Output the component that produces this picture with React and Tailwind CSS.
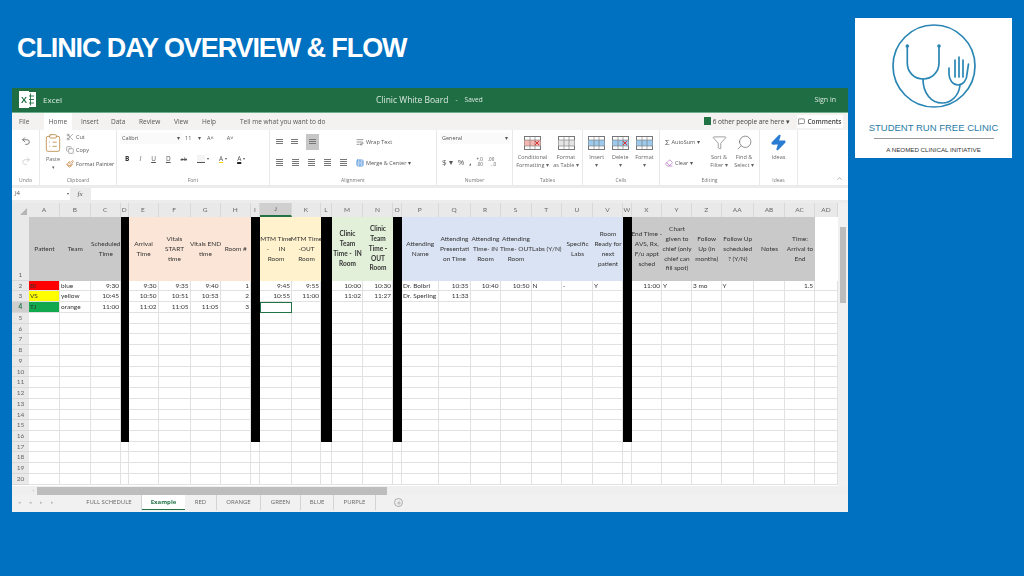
import React from "react";
import {
  Undo2,
  Redo2,
  Scissors,
  Copy,
  Paintbrush,
  ChevronUp,
  Search,
  Zap,
  Eraser,
  MessageSquare,
  Filter,
  Plus,
  WrapText,
  TableCellsMerge,
  ClipboardList,
} from "lucide-react";

const COLUMNS = ["A","B","C","D","E","F","G","H","I","J","K","L","M","N","O","P","Q","R","S","T","U","V","W","X","Y","Z","AA","AB","AC","AD"];
const BLACK = ["D", "I", "L", "O", "W"];

const HEADERS = {
  A: "Patient", B: "Team", C: "Scheduled\nTime",
  E: "Arrival\nTime", F: "Vitals\nSTART\ntime", G: "Vitals END\ntime", H: "Room #",
  J: "MTM Time\n-      IN\nRoom", K: "MTM Time\n-OUT\nRoom",
  M: "Clinic\nTeam\nTime -  IN\nRoom", N: "Clinic\nTeam\nTime -\nOUT\nRoom",
  P: "Attending\nName", Q: "Attending\nPresentati\non Time", R: "Attending\nTime- IN\nRoom", S: "Attending\nTime- OUT\nRoom",
  T: "Labs (Y/N)", U: "Specific\nLabs", V: "Room\nReady for\nnext\npatient",
  X: "End Time -\nAVS, Rx,\nF/u appt\nsched", Y: "Chart\ngiven to\nchief (only\nchief can\nfill spot)", Z: "Follow\nUp (in\nmonths)", AA: "Follow Up\nscheduled\n? (Y/N)", AB: "Notes", AC: "Time:\nArrival to\nEnd",
};

function headerFill(col) {
  if (["A", "B", "C", "X", "Y", "Z", "AA", "AB", "AC"].includes(col)) return "bg-[#c9c9c9]";
  if (["E", "F", "G", "H"].includes(col)) return "bg-[#fbe5d6]";
  if (["J", "K"].includes(col)) return "bg-[#fff2cc]";
  if (["M", "N"].includes(col)) return "bg-[#e2f0d9]";
  if (["P", "Q", "R", "S", "T", "U", "V"].includes(col)) return "bg-[#dae3f3]";
  return "bg-white";
}

const ROWS = {
  2: { A: "BI", B: "blue", C: "9:30", E: "9:30", F: "9:35", G: "9:40", H: "1", J: "9:45", K: "9:55", M: "10:00", N: "10:30", P: "Dr. Bolbri", Q: "10:35", R: "10:40", S: "10:50", T: "N", U: "-", V: "Y", X: "11:00", Y: "Y", Z: "3 mo", AA: "Y", AC: "1.5" },
  3: { A: "VS", B: "yellow", C: "10:45", E: "10:50", F: "10:51", G: "10:53", H: "2", J: "10:55", K: "11:00", M: "11:02", N: "11:27", P: "Dr. Sperling", Q: "11:33" },
  4: { A: "TJ", B: "orange", C: "11:00", E: "11:02", F: "11:05", G: "11:05", H: "3" },
};
const LEFT_ALIGNED = ["A", "B", "P", "T", "U", "V", "Y", "Z", "AA"];
const PATIENT_FILL = { 2: "bg-[#ff0000]", 3: "bg-[#ffff00]", 4: "bg-[#12a84d]" };
const ROW_NUMBERS = Array.from({ length: 19 }, (_, i) => i + 2);

function Group({ label, className, children }) {
  return (
    <div className={`flex flex-col border-r border-[#e8e8e8] ${className}`}>
      <div className="flex-1 min-h-0 flex">{children}</div>
      <div className="h-[10px] text-center text-[5px] leading-[10px] text-[#777]">{label}</div>
    </div>
  );
}

function BigButton({ children, lines, className = "" }) {
  return (
    <div className={`flex flex-col items-center pt-[3px] ${className}`}>
      <div className="h-[20px] flex items-center justify-center">{children}</div>
      <div className="text-center text-[5.5px] leading-[8.5px] text-[#666] whitespace-pre">{lines}</div>
    </div>
  );
}

function GridIcon({ fill, accent }) {
  return (
    <svg width="17" height="16" viewBox="0 0 17 16">
      <rect x="0.5" y="1.5" width="16" height="13" fill="#fff" stroke="#777" />
      <rect x="0.5" y="5" width="16" height="6" fill={fill} />
      <path d="M6 1.5V14.5M11 1.5V14.5M0.5 5H16.5M0.5 11H16.5" stroke="#777" strokeWidth="0.6" />
      {accent && <path d="M11 6l4 4M15 6l-4 4" stroke={accent} strokeWidth="1" />}
    </svg>
  );
}

function Ribbon() {
  return (
    <div className="h-[57px] flex bg-white border-b-2 border-[#ececec]">
      <Group label="Undo" className="w-[28px]">
        <div className="w-full flex flex-col items-center gap-[10px] pt-[6px]">
          <Undo2 size={10} className="text-[#666]" />
          <Redo2 size={10} className="text-[#ccc]" />
        </div>
      </Group>
      <Group label="Clipboard" className="w-[77px]">
        <div className="w-[26px] flex flex-col items-center pt-[3px]">
          <ClipboardList size={20} strokeWidth={1} className="text-[#b98b45]" />
          <div className="text-[5.5px] leading-[9px] text-[#666] mt-[2px]">Paste</div>
          <div className="text-[5px] leading-[7px] text-[#666]">▾</div>
        </div>
        <div className="flex flex-col gap-[3.5px] pt-[2px] text-[5.5px] leading-[10px] text-[#555]">
          <div className="flex items-center gap-[2px]"><Scissors size={8} className="text-[#888]" />Cut</div>
          <div className="flex items-center gap-[2px]"><Copy size={8} className="text-[#888]" />Copy</div>
          <div className="flex items-center gap-[2px] whitespace-nowrap"><Paintbrush size={8} className="text-[#c0762a]" />Format Painter</div>
        </div>
      </Group>
      <Group label="Font" className="w-[153px]">
        <div className="pl-[3px] pt-[3px] flex flex-col gap-[9px] text-[#555]">
          <div className="flex items-center text-[5.5px] leading-[11px]">
            <div className="w-[63px] flex justify-between pl-[2px] pr-[3px] bg-[#fafafa]"><span>Calibri</span><span>▾</span></div>
            <div className="w-[20px] flex justify-between pl-[2px] pr-[2px]"><span>11</span><span>▾</span></div>
            <span className="ml-[4px]">A˄</span>
            <span className="ml-[13px]">A˅</span>
          </div>
          <div className="flex items-center gap-[10px] pl-[5px] text-[6.5px] leading-[12px]">
            <span className="font-bold text-[#333]">B</span>
            <span className="italic">I</span>
            <span className="underline">U</span>
            <span className="underline">D</span>
            <span className="line-through text-[5.5px]">ab</span>
            <span className="flex items-center gap-[2px]"><span className="w-[8px] h-[8px] border-b border-[#555] bg-[#f4f4f4]" /><span className="text-[4px]">▾</span></span>
            <span className="flex items-center gap-[2px]"><span className="underline decoration-[#ffd400]">A</span><span className="text-[4px]">▾</span></span>
            <span className="flex items-center gap-[2px]"><span className="underline decoration-[#222] decoration-2">A</span><span className="text-[4px]">▾</span></span>
          </div>
        </div>
      </Group>
      <Group label="Alignment" className="w-[167px]">
        <div className="w-[86px] pt-[4px] pl-[6px]">
          <div className="flex items-center gap-[8px] h-[16px]">
            <AlignBars count={3} />
            <AlignBars count={3} />
            <div className="w-[13px] h-[16px] bg-[#c6c6c6] flex items-center justify-center"><AlignBars count={3} /></div>
          </div>
          <div className="flex items-center gap-[9px] mt-[7px] h-[12px]">
            <AlignBars count={4} />
            <AlignBars count={4} />
            <AlignBars count={4} />
            <AlignBars count={4} />
            <AlignBars count={4} />
          </div>
        </div>
        <div className="pt-[4px] text-[5.5px] text-[#555] whitespace-nowrap">
          <div className="flex items-center gap-[2px] h-[16px]"><WrapText size={8} className="text-[#666]" />Wrap Text</div>
          <div className="flex items-center gap-[2px] h-[12px] mt-[7px]"><TableCellsMerge size={8} className="text-[#2b7cd3]" />Merge &amp; Center ▾</div>
        </div>
      </Group>
      <Group label="Number" className="w-[76px]">
        <div className="pl-[3px] pt-[3px] text-[#555]">
          <div className="w-[70px] flex justify-between px-[2px] text-[5.5px] leading-[11px] bg-[#fafafa]"><span>General</span><span>▾</span></div>
          <div className="flex items-center gap-[5px] pl-[2px] mt-[12px] text-[8px] leading-[12px]">
            <span>$ ▾</span><span>%</span><span className="font-bold">,</span><span className="text-[4.5px] leading-[5px] whitespace-pre">{"+.0\n.00"}</span><span className="text-[4.5px] leading-[5px] whitespace-pre">{".00\n→.0"}</span>
          </div>
        </div>
      </Group>
      <Group label="Tables" className="w-[70px]">
        <div className="w-full flex justify-around px-[1px]">
          <BigButton lines={"Conditional\nFormatting ▾"}><GridIcon fill="#f4b6b0" accent="#d33" /></BigButton>
          <BigButton lines={"Format\nas Table ▾"}><GridIcon fill="#e4e4e4" /></BigButton>
        </div>
      </Group>
      <Group label="Cells" className="w-[77px]">
        <div className="w-full flex justify-around px-[2px]">
          <BigButton lines={"Insert\n▾"}><GridIcon fill="#9cc9ec" /></BigButton>
          <BigButton lines={"Delete\n▾"}><GridIcon fill="#9cc9ec" accent="#d33" /></BigButton>
          <BigButton lines={"Format\n▾"}><GridIcon fill="#9cc9ec" /></BigButton>
        </div>
      </Group>
      <Group label="Editing" className="w-[100px]">
        <div className="w-[46px] pt-[4px] pl-[5px] text-[5.5px] text-[#555] whitespace-nowrap">
          <div className="h-[16px] flex items-center gap-[2px]"><span className="text-[8px]">Σ</span>AutoSum ▾</div>
          <div className="h-[12px] mt-[7px] flex items-center gap-[2px]"><Eraser size={8} className="text-[#b06ac0]" />Clear ▾</div>
        </div>
        <BigButton lines={"Sort &\nFilter ▾"} className="w-[26px]"><Filter size={15} strokeWidth={1} className="text-[#666]" /></BigButton>
        <BigButton lines={"Find &\nSelect ▾"} className="w-[24px]"><Search size={17} strokeWidth={1} className="text-[#666] -scale-x-100" /></BigButton>
      </Group>
      <Group label="Ideas" className="w-[38px]">
        <BigButton lines="Ideas" className="w-full"><Zap size={17} className="text-[#2b7cd3] fill-[#2b7cd3]" /></BigButton>
      </Group>
      <div className="flex-1 flex items-end justify-end pr-[5px] pb-[3px]">
        <ChevronUp size={7} className="text-[#777]" />
      </div>
    </div>
  );
}

function AlignBars({ count }) {
  return (
    <div className="w-[7px] flex flex-col gap-[1px]">
      {Array.from({ length: count }, (_, i) => (
        <div key={i} className="h-px bg-[#777]" />
      ))}
    </div>
  );
}

function Sheet() {
  return (
    <div className="h-[284px] flex bg-white">
      <div className="w-[826px] grid grid-cols-[17px_31px_30.5px_30.5px_7.5px_30px_32px_30px_30.5px_9px_32px_29px_11px_31px_30px_9px_36.5px_32px_30px_31px_30.5px_31px_30px_8.5px_30.5px_30px_29.5px_32.5px_31px_30px_23px] grid-rows-[14px_64px_repeat(19,10.74px)] font-['Lato',sans-serif]">
        <div className="bg-[#e9e9e9] flex items-end justify-end p-[2px]">
          <div className="w-0 h-0 border-l-[7px] border-b-[7px] border-l-transparent border-b-[#b5b5b5]" />
        </div>
        {COLUMNS.map((col) => (
          <div
            key={col}
            className={`flex items-center justify-center text-[6.5px] text-[#666] border-r border-[#d8d8d8] ${col === "J" ? "bg-[#cfcfcf] border-b-2 border-b-[#217346]" : "bg-[#e9e9e9]"}`}
          >
            {col}
          </div>
        ))}

        <div className="bg-[#e9e9e9] flex items-end justify-center text-[6.5px] text-[#666] border-b border-[#d8d8d8]">1</div>
        {COLUMNS.map((col) =>
          BLACK.includes(col) ? (
            <div key={col} className="bg-black" />
          ) : (
            <div
              key={col}
              className={`flex items-center justify-center text-center text-[6.5px] leading-[9.8px] text-[#333] whitespace-pre overflow-visible ${headerFill(col)} ${col === "M" || col === "N" ? "font-bold" : ""}`}
            >
              {HEADERS[col]}
            </div>
          )
        )}

        {ROW_NUMBERS.map((row) => (
          <React.Fragment key={row}>
            <div className={`flex items-center justify-center text-[6.5px] border-b border-[#d8d8d8] ${row === 4 ? "bg-[#cfcfcf] text-[#217346] font-bold" : "bg-[#e9e9e9] text-[#666]"}`}>
              {row}
            </div>
            {COLUMNS.map((col) => {
              if (BLACK.includes(col) && row <= 16) return <div key={col} className="bg-black" />;
              const value = ROWS[row]?.[col];
              const left = LEFT_ALIGNED.includes(col);
              const fill = col === "A" && PATIENT_FILL[row] ? PATIENT_FILL[row] : "";
              const selected = col === "J" && row === 4;
              return (
                <div
                  key={col}
                  className={`flex items-center overflow-visible whitespace-nowrap text-[6.5px] text-[#333] ${left ? "justify-start pl-[1px]" : "justify-end pr-[1px]"} ${fill} ${selected ? "border border-[#217346]" : "border-r border-b border-[#e1e1e1]"}`}
                >
                  {value}
                </div>
              );
            })}
          </React.Fragment>
        ))}
      </div>
      <div className="w-[10px] bg-[#f1f1f1] flex justify-center">
        <div className="w-[6px] h-[76px] mt-[24px] bg-[#bcbcbc]" />
      </div>
    </div>
  );
}

const TABS = [
  { name: "FULL SCHEDULE", width: "w-[65px]" },
  { name: "Example", width: "w-[43px]", active: true },
  { name: "RED", width: "w-[32px]" },
  { name: "ORANGE", width: "w-[44px]" },
  { name: "GREEN", width: "w-[40px]" },
  { name: "BLUE", width: "w-[33px]" },
  { name: "PURPLE", width: "w-[42px]" },
];

function SheetTabs() {
  return (
    <div className="h-[17px] flex items-start bg-[#f1f1f1] font-['Open_Sans',sans-serif] text-[6px] text-[#666]">
      <div className="w-[65px] pl-[6px] h-[15px] flex items-center gap-[8px] text-[5px] text-[#bbb]">
        <span>◂</span><span>◂</span><span>▸</span><span>▸</span>
      </div>
      {TABS.map((tab) => (
        <div
          key={tab.name}
          className={`${tab.width} h-[15px] flex items-center justify-center ${tab.active ? "bg-white border-b border-[#217346] text-[#217346] font-bold" : "border-r border-[#d4d4d4]"}`}
        >
          {tab.name}
        </div>
      ))}
      <div className="ml-[18px] mt-[3px] w-[9px] h-[9px] rounded-full border border-[#aaa] flex items-center justify-center">
        <Plus size={6} className="text-[#888]" />
      </div>
    </div>
  );
}

function ExcelWindow() {
  return (
    <div className="w-[836px] h-[424px] flex flex-col bg-white blur-[0.35px] font-['Open_Sans',sans-serif]">
      <div className="h-[25px] bg-[#1f6e43] flex items-center text-[#dbe9e0] border-b border-[#6fae8b]">
        <svg width="19" height="19" viewBox="0 0 19 19" className="ml-[6px]">
          <rect x="7" y="2" width="11" height="15" fill="#fff" />
          <path d="M9 6H16M9 9.5H16M9 13H16M12.5 3.5V15.5" stroke="#1f6e43" strokeWidth="0.9" />
          <rect x="1" y="1" width="10" height="17" fill="#fff" />
          <text x="6" y="13" textAnchor="middle" fontSize="9" fontWeight="700" fill="#1f6e43" fontFamily="Liberation Sans">X</text>
        </svg>
        <div className="ml-[6px] w-[333px] text-[8px]">Excel</div>
        <div className="text-[8.5px] whitespace-nowrap">Clinic White Board</div>
        <div className="ml-[7px] text-[6.5px]">-</div>
        <div className="ml-[7px] text-[6.5px]">Saved</div>
        <div className="ml-auto mr-[12px] text-[7px]">Sign in</div>
      </div>
      <div className="h-[17px] bg-[#f3f2f1] flex items-center text-[6.5px] text-[#555] whitespace-nowrap">
        <div className="ml-[7px] w-[25px]">File</div>
        <div className="h-full w-[28px] bg-white flex items-center justify-center">Home</div>
        <div className="ml-[9px] w-[30px]">Insert</div>
        <div className="w-[28px]">Data</div>
        <div className="w-[35px]">Review</div>
        <div className="w-[28px]">View</div>
        <div className="w-[38px]">Help</div>
        <div>Tell me what you want to do</div>
        <div className="ml-auto flex items-center gap-[2px]">
          <div className="w-[7px] h-[8px] bg-[#217346]" />
          <span className="text-[#444]">6 other people are here ▾</span>
        </div>
        <div className="ml-[7px] mr-[5px] w-[46px] h-[13px] bg-white flex items-center justify-center gap-[2px] font-semibold text-[#444]">
          <MessageSquare size={7} />Comments
        </div>
      </div>
      <Ribbon />
      <div className="h-[16px] bg-[#ececec] flex items-start pt-[1px] text-[6px] text-[#555]">
        <div className="w-[58px] h-[12px] bg-white flex items-center justify-between pl-[3px] pr-[1px]"><span>J4</span><span className="text-[4px]">▾</span></div>
        <div className="w-[20px] h-[12px] flex items-center justify-center italic text-[7px] font-['Liberation_Serif',serif]">fx</div>
        <div className="ml-px flex-1 h-[12px] bg-white" />
      </div>
      <Sheet />
      <div className="h-[9px] bg-[#efefef] flex items-center">
        <div className="w-[25px] text-right text-[5px] leading-[9px] text-[#aaa] pr-[3px]">‹</div>
        <div className="w-[350px] h-[8px] bg-[#bdbdbd]" />
      </div>
      <SheetTabs />
    </div>
  );
}

function Logo() {
  return (
    <div className="w-[157px] h-[140px] mt-[18px] ml-[7px] bg-white flex flex-col items-center">
      <svg width="157" height="96" viewBox="0 0 157 96" fill="none" stroke="#2b86b4" strokeWidth="1.7" strokeLinecap="round">
        <circle cx="79" cy="48" r="41" />
        <circle cx="52.3" cy="28" r="1.8" fill="#2b86b4" stroke="none" />
        <circle cx="84" cy="28" r="1.8" fill="#2b86b4" stroke="none" />
        <path d="M52.3 28V45C52.3 54 59 61 68 61C77 61 84 54 84 45V28" />
        <path d="M68 61C68 75 76 85 87 85C97 85 104 77 105 67" />
        <path d="M94 50V56C94 62 98 67 103 67C108 67 112 62 112 56L113.5 46" />
        <path d="M100 59V42M104 59V39M108 59V42" />
      </svg>
      <div className="mt-[8px] text-[9.5px] leading-[12px] text-[#2b7ca6] whitespace-nowrap font-['Liberation_Sans',sans-serif]">STUDENT RUN FREE CLINIC</div>
      <div className="mt-[4px] w-[120px] h-px bg-[#9a9a9a]" />
      <div className="mt-[6px] text-[6.2px] leading-[9px] text-[#333] whitespace-nowrap font-['Liberation_Sans',sans-serif]">A NEOMED CLINICAL INITIATIVE</div>
    </div>
  );
}

export default function App() {
  return (
    <div className="w-[1024px] h-[576px] bg-[#0070c0] flex overflow-hidden">
      <div className="pl-[12px]">
        <div className="h-[88px] pt-[32px] pl-[5px]">
          <h1 className="text-[27px] leading-[32px] font-bold tracking-[-1.1px] text-white whitespace-nowrap font-['Liberation_Sans',sans-serif]">
            CLINIC DAY OVERVIEW &amp; FLOW
          </h1>
        </div>
        <ExcelWindow />
      </div>
      <Logo />
    </div>
  );
}
